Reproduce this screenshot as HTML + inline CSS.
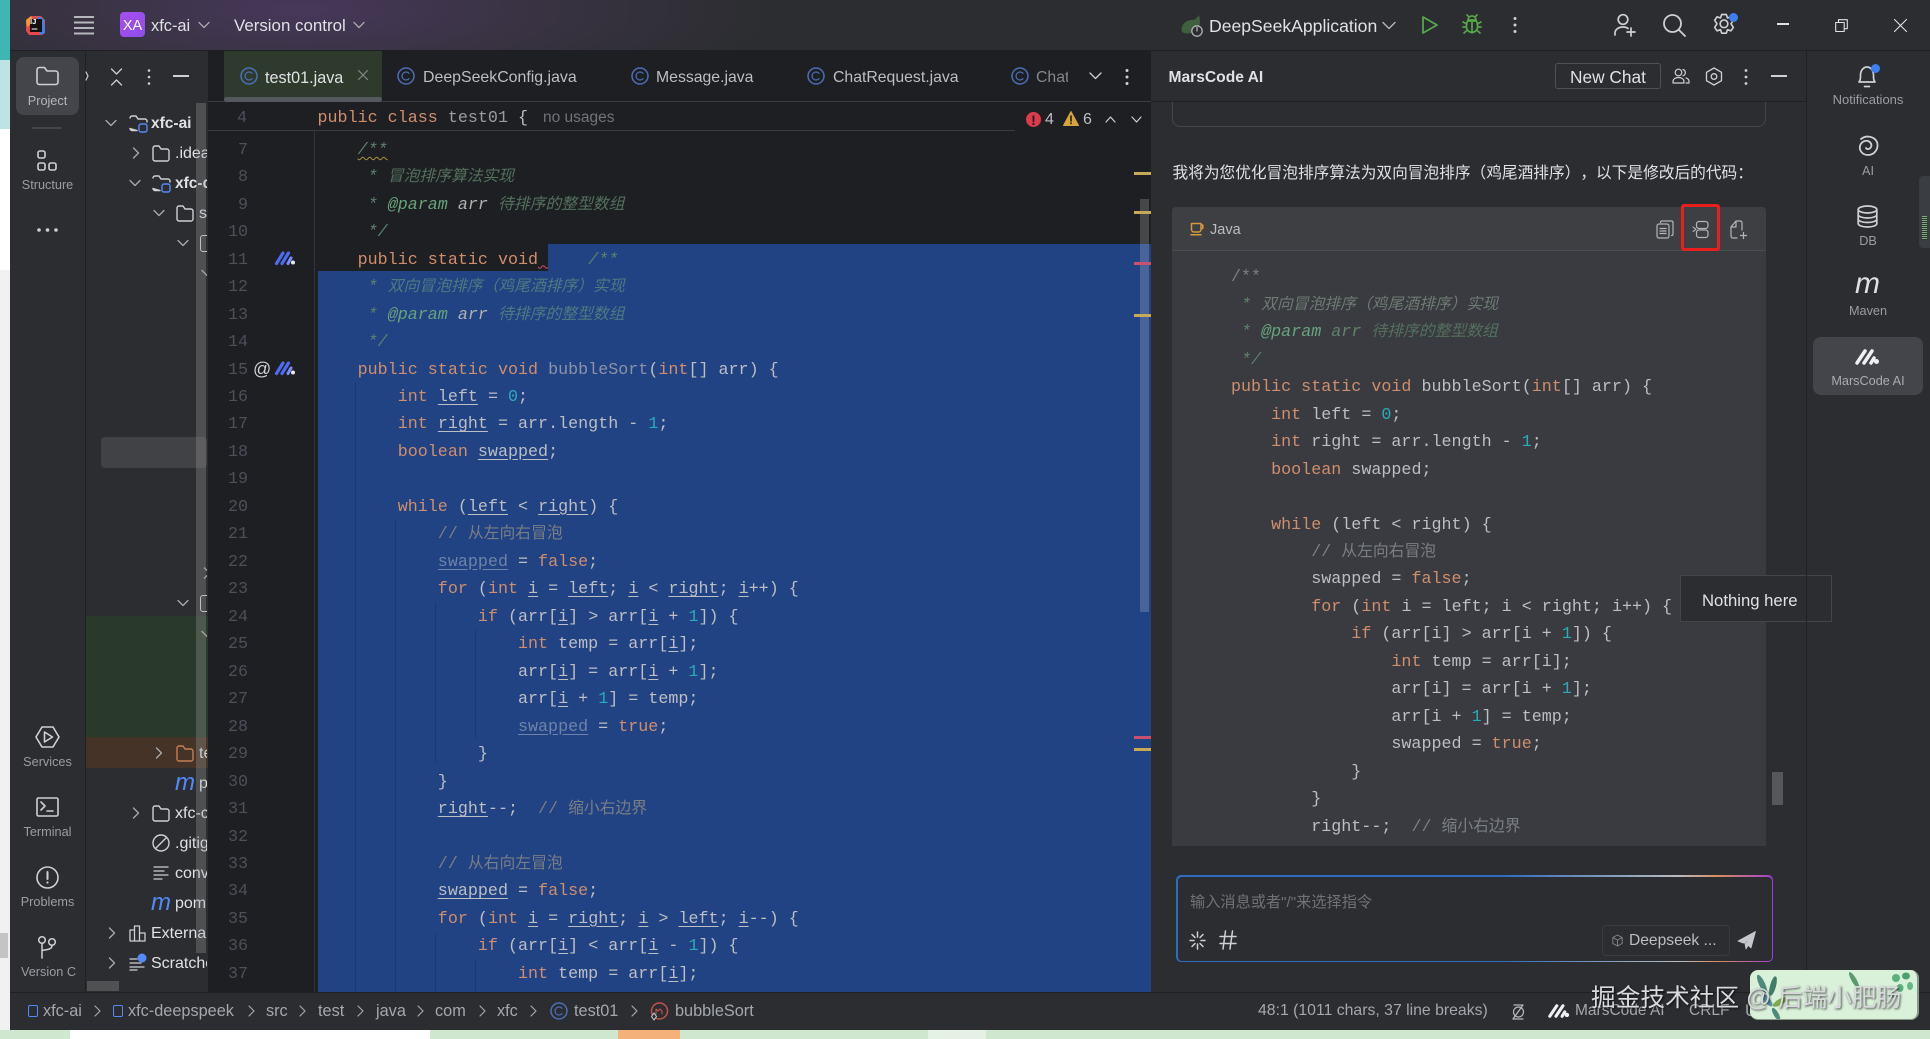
<!DOCTYPE html>
<html><head><meta charset="utf-8"><title>MarsCode AI</title>
<style>
*{box-sizing:border-box}
html,body{margin:0;padding:0;width:1930px;height:1039px;overflow:hidden;background:#cfe6cf}
body{position:relative;font-family:"Liberation Sans","Noto Sans CJK SC",sans-serif;color:#bcbec4}
.a{position:absolute}
.t{position:absolute;white-space:nowrap;line-height:20px;font-size:15.5px;margin-top:1px}
svg{position:absolute;overflow:visible;fill:none;stroke:#ced0d6;stroke-width:1.5;stroke-linecap:round;stroke-linejoin:round}
.lb{position:absolute;font-size:12.7px;line-height:16px;color:#9a9da3;text-align:center;white-space:nowrap}
pre{position:absolute;margin:0;font-family:"Liberation Mono","Noto Sans CJK SC",monospace;font-size:16.72px;line-height:27.47px;color:#bcbec4;white-space:pre}
pre i{font-style:italic}
.k{color:#cf8e6d}.n{color:#2aacb8}.c{color:#7a7e85}.d{color:#5f826b;font-style:italic}.p{color:#67a37c;font-style:italic}.ar{color:#aeb3b0;font-style:italic}
.u{text-decoration:underline;text-underline-offset:3px}.f{color:#6f83a8}.g{color:#8b93a6}
.z{font-family:"Liberation Sans","Noto Sans CJK SC",sans-serif;font-size:15.8px;line-height:0}
.d .z{color:#53705d}
.sel .z{color:#4f7a80}
.st{position:absolute;top:1001px;font-size:16.3px;line-height:20px;color:#a4a7ad;white-space:nowrap}
</style></head>
<body>
<!-- backdrop left strip -->
<div class="a" style="left:0;top:0;width:10px;height:60px;background:#3fb6b4"></div>
<div class="a" style="left:0;top:60px;width:10px;height:69px;background:#bde4e2"></div>
<div class="a" style="left:0;top:129px;width:10px;height:141px;background:#fff"></div>
<div class="a" style="left:0;top:270px;width:10px;height:760px;background:#f1f1f1"></div>
<div class="a" style="left:0;top:933px;width:8px;height:25px;background:#c4c4c4"></div>
<div class="a" style="left:0;top:1030px;width:1930px;height:9px;background:#cfe6cf"></div>
<div class="a" style="left:70px;top:1030px;width:360px;height:9px;background:#fff"></div>
<div class="a" style="left:618px;top:1030px;width:62px;height:9px;background:#f4b27a"></div>
<div class="a" style="left:928px;top:1030px;width:58px;height:9px;background:#e4f1e4"></div>

<!-- IDE frame -->
<div class="a" style="left:10px;top:0;width:1920px;height:1030px;background:#2b2d30"></div>
<div class="a" style="left:10px;top:0;width:1100px;height:50px;background:radial-gradient(ellipse 480px 110px at 290px 10px,#46385a 0%,#3a3344 45%,#2b2d30 100%)"></div>
<div class="a" style="left:10px;top:50px;width:1920px;height:1px;background:#1f2022"></div>

<!-- title bar -->
<svg style="left:25px;top:15px" width="21" height="21" viewBox="0 0 21 21"><path d="M1 5L6 1h10l4 4v13l-3 2H4L1 16z" fill="#e8474c" stroke="none"/><path d="M12 1l7 3 1 14-5 2z" fill="#3b82e6" stroke="none"/><path d="M1 5l5-4 3 6-7 5z" fill="#f39a32" stroke="none"/><rect x="5" y="4" width="12" height="13" fill="#111" stroke="none"/><path d="M7 14h5" stroke="#fff" stroke-width="1"/></svg>
<div class="t" style="left:30px;top:15px;font-size:7.5px;font-weight:bold;color:#fff;line-height:12px">IJ</div>
<svg style="left:73px;top:15px" width="22" height="20" viewBox="0 0 22 20"><path d="M1 2h20M1 7.500h20M1 13h20M1 18.500h20" stroke="#b5b7bc" stroke-width="2" stroke-linecap="butt"/></svg>
<div class="a" style="left:120px;top:12px;width:25px;height:25px;border-radius:4px;background:linear-gradient(135deg,#a84ff0,#8d4ee8)"></div>
<div class="t" style="left:120px;top:15px;width:25px;text-align:center;font-size:14.500px;color:#fff">XA</div>
<div class="t" style="left:151px;top:15px;color:#dfe1e5;font-size:16.400px">xfc-ai</div>
<svg style="left:198px;top:21px" width="12" height="8" viewBox="0 0 12 8"><path d="M1 1.500l5 5 5-5" stroke="#a9abb1" stroke-width="1.300"/></svg>
<div class="t" style="left:234px;top:15px;color:#dfe1e5;font-size:16.900px">Version control</div>
<svg style="left:353px;top:21px" width="12" height="8" viewBox="0 0 12 8"><path d="M1 1.500l5 5 5-5" stroke="#a9abb1" stroke-width="1.300"/></svg>

<svg style="left:1180px;top:14px" width="26" height="24" viewBox="0 0 26 24"><path d="M2 18C0 11 6 6 12 6c3 0 5-2 7-5 2 7 1 14-5 17-4 2-9 2-12 0z" fill="#3f5f3f" stroke="none"/><circle cx="17" cy="17" r="5.200" fill="#2b2d30" stroke="#aeb1b6" stroke-width="1.300"/><path d="M17 13.500V17" stroke="#aeb1b6" stroke-width="1.300"/></svg>
<div class="t" style="left:1209px;top:15px;font-size:17.600px;color:#dfe1e5">DeepSeekApplication</div>
<svg style="left:1382px;top:21px" width="14" height="9" viewBox="0 0 14 9"><path d="M1 1.500l6 6 6-6" stroke="#b5b7bc" stroke-width="1.400"/></svg>
<svg style="left:1421px;top:15px" width="18" height="20" viewBox="0 0 18 20"><path d="M2 2l14 8-14 8z" stroke="#57a64a" stroke-width="1.800"/></svg>
<svg style="left:1462px;top:14px" width="20" height="22" viewBox="0 0 20 22"><path d="M6 6a4 4 0 0 1 8 0zM5.500 7h9c1.500 3 1.500 7 0 9-2 3-7 3-9 0-1.500-2-1.500-6 0-9zM10 7v12M5 10L1 8M15 10l4-2M4.500 13H1M15.500 13H19M5.500 16L2 19M14.500 16l3.500 3M7 3L5 1M13 3l2-2" stroke="#57a64a" stroke-width="1.700"/></svg>
<svg style="left:1512px;top:16px" width="6" height="18" viewBox="0 0 6 18"><circle cx="3" cy="2.500" r="1.500" fill="#ced0d6" stroke="none"/><circle cx="3" cy="9" r="1.500" fill="#ced0d6" stroke="none"/><circle cx="3" cy="15.500" r="1.500" fill="#ced0d6" stroke="none"/></svg>
<svg style="left:1613px;top:13px" width="24" height="24" viewBox="0 0 24 24"><circle cx="10" cy="6.500" r="4.800" stroke-width="1.700"/><path d="M2 22v-2c0-3 3-6 8-6 2 0 4 .5 5 1.500M18 15v8M14 19h8" stroke-width="1.700"/></svg>
<svg style="left:1662px;top:13px" width="24" height="24" viewBox="0 0 24 24"><circle cx="10.500" cy="10.500" r="8.500" stroke-width="1.800"/><path d="M17 17l6 6" stroke-width="1.800"/></svg>
<svg style="left:1710px;top:11px" width="28" height="28" viewBox="0 0 24 24"><path d="M10 2h4l1 3 3-1 2 3-2 3 2 3-2 3-3-1-1 3h-4l-1-3-3 1-2-3 2-3-2-3 2-3 3 1z" transform="translate(0 1)" stroke-width="1.400"/><circle cx="12" cy="11" r="3.300" stroke-width="1.400"/></svg>
<div class="a" style="left:1729px;top:13px;width:9px;height:9px;border-radius:50%;background:#3d7ef0"></div>
<div class="a" style="left:1777px;top:23px;width:12px;height:1.500px;background:#dfe1e5"></div>
<svg style="left:1835px;top:19px" width="13" height="13" viewBox="0 0 13 13"><path d="M.700 3.500h8.500v9H.700zM3.500 3.500V.700h8.800v9H9.200" stroke="#dfe1e5" stroke-width="1.100" stroke-linecap="butt"/></svg>
<svg style="left:1894px;top:19px" width="13" height="13" viewBox="0 0 13 13"><path d="M.500.500l12 12M12.500.500l-12 12" stroke="#dfe1e5" stroke-width="1.100"/></svg>

<!-- left tool strip -->
<div class="a" style="left:85px;top:50px;width:1px;height:942px;background:#1f2022"></div>
<div class="a" style="left:16px;top:57px;width:63px;height:58px;border-radius:8px;background:#43454a"></div>
<svg style="left:36px;top:66px" width="23" height="20" viewBox="0 0 23 20"><path d="M1 4a2.500 2.500 0 0 1 2.500-2.500h5L11 5h8.500A2.500 2.500 0 0 1 22 7.500V16a2.500 2.500 0 0 1-2.500 2.500h-16A2.500 2.500 0 0 1 1 16z" stroke-width="1.600"/></svg>
<div class="lb" style="left:16px;top:93px;width:63px;color:#b4b6bb">Project</div>
<div class="a" style="left:32px;top:127px;width:30px;height:2px;background:#43454a"></div>
<svg style="left:36px;top:150px" width="22" height="22" viewBox="0 0 22 22"><rect x="2" y="1" width="7" height="7" rx="1.800" stroke-width="1.600"/><rect x="2" y="13" width="7" height="7" rx="1.800" stroke-width="1.600"/><rect x="13" y="13" width="7" height="7" rx="1.800" stroke-width="1.600"/></svg>
<div class="lb" style="left:10px;top:177px;width:75px">Structure</div>
<svg style="left:36px;top:227px" width="24" height="6" viewBox="0 0 24 6"><circle cx="3" cy="3" r="1.800" fill="#ced0d6" stroke="none"/><circle cx="11.500" cy="3" r="1.800" fill="#ced0d6" stroke="none"/><circle cx="20" cy="3" r="1.800" fill="#ced0d6" stroke="none"/></svg>

<svg style="left:35px;top:725px" width="25" height="24" viewBox="0 0 25 24"><path d="M7 2h11l6 10-6 10H7L1 12z" stroke-width="1.600"/><path d="M9.500 7l8 5-8 5z" stroke-width="1.600"/></svg>
<div class="lb" style="left:10px;top:754px;width:75px">Services</div>
<svg style="left:36px;top:797px" width="23" height="20" viewBox="0 0 23 20"><rect x="1" y="1" width="21" height="18" rx="1.500" stroke-width="1.600"/><path d="M5 5l4 4-4 4M11 14h6" stroke-width="1.600"/></svg>
<div class="lb" style="left:10px;top:824px;width:75px">Terminal</div>
<svg style="left:36px;top:866px" width="23" height="23" viewBox="0 0 23 23"><circle cx="11.500" cy="11.500" r="10.500" stroke-width="1.600"/><path d="M11.500 6v7" stroke-width="2"/><circle cx="11.500" cy="16.500" r="1.100" fill="#ced0d6" stroke="none"/></svg>
<div class="lb" style="left:10px;top:894px;width:75px">Problems</div>
<svg style="left:37px;top:936px" width="21" height="23" viewBox="0 0 21 23"><circle cx="5" cy="4" r="3.300" stroke-width="1.500"/><circle cx="15" cy="6" r="3.300" stroke-width="1.500"/><path d="M5 7.500V22M15 9.500c0 4-5 4-10 5" stroke-width="1.500"/></svg>
<div class="lb" style="left:10px;top:964px;width:66px;overflow:hidden;text-align:right">Version C</div>

<!-- project panel -->
<div class="a" style="left:86px;top:616px;width:122px;height:121px;background:#2a3a2a"></div>
<div class="a" style="left:86px;top:737px;width:122px;height:31px;background:#443326"></div>
<div class="a" style="left:101px;top:437px;width:106px;height:31px;border-radius:4px;background:#414246"></div>
<svg style="left:85px;top:70px" width="4" height="12" viewBox="0 0 4 12"><path d="M1 2l2 4-2 4" stroke-width="1.200"/></svg>
<svg style="left:110px;top:68px" width="13" height="18" viewBox="0 0 13 18"><path d="M1.500 1l5 5 5-5M1.500 17l5-5 5 5" stroke-width="1.300"/></svg>
<svg style="left:146px;top:68px" width="6" height="18" viewBox="0 0 6 18"><circle cx="3" cy="2.500" r="1.300" fill="#ced0d6" stroke="none"/><circle cx="3" cy="9" r="1.300" fill="#ced0d6" stroke="none"/><circle cx="3" cy="15.500" r="1.300" fill="#ced0d6" stroke="none"/></svg>
<div class="a" style="left:173px;top:75px;width:16px;height:2px;background:#ced0d6"></div>

<!-- tree: clipped at x=207 -->
<div class="a" style="left:0;top:0;width:207px;height:990px;overflow:hidden">
<svg style="left:105px;top:119px" width="12" height="8" viewBox="0 0 12 8"><path d="M1 1.500l5 5 5-5" stroke="#a9abb1" stroke-width="1.300"/></svg>
<svg style="left:129px;top:115px" width="20" height="18" viewBox="0 0 20 18"><path d="M1 3a2 2 0 0 1 2-2h4l2 3h7a2 2 0 0 1 2 2v1M8 15.500H3a2 2 0 0 1-2-2z" stroke-width="1.400"/><rect x="10" y="9" width="8" height="8" rx="2" stroke="#548af7" stroke-width="1.400"/></svg>
<div class="t" style="left:151px;top:113px;font-weight:bold;color:#dfe1e5">xfc-ai</div>
<svg style="left:132px;top:147px" width="8" height="12" viewBox="0 0 8 12"><path d="M1.500 1l5 5-5 5" stroke="#a9abb1" stroke-width="1.300"/></svg>
<svg style="left:152px;top:145px" width="18" height="17" viewBox="0 0 18 17"><path d="M1 3a2 2 0 0 1 2-2h4l2 3h6a2 2 0 0 1 2 2v8a2 2 0 0 1-2 2H3a2 2 0 0 1-2-2z" stroke-width="1.400"/></svg>
<div class="t" style="left:175px;top:143px;color:#dfe1e5;font-size:16px">.idea</div>
<svg style="left:129px;top:179px" width="12" height="8" viewBox="0 0 12 8"><path d="M1 1.500l5 5 5-5" stroke="#a9abb1" stroke-width="1.300"/></svg>
<svg style="left:152px;top:175px" width="20" height="18" viewBox="0 0 20 18"><path d="M1 3a2 2 0 0 1 2-2h4l2 3h7a2 2 0 0 1 2 2v1M8 15.500H3a2 2 0 0 1-2-2z" stroke-width="1.400"/><rect x="10" y="9" width="8" height="8" rx="2" stroke="#548af7" stroke-width="1.400"/></svg>
<div class="t" style="left:175px;top:173px;font-weight:bold;color:#dfe1e5">xfc-deepspeek</div>
<svg style="left:153px;top:209px" width="12" height="8" viewBox="0 0 12 8"><path d="M1 1.500l5 5 5-5" stroke="#a9abb1" stroke-width="1.300"/></svg>
<svg style="left:176px;top:205px" width="18" height="17" viewBox="0 0 18 17"><path d="M1 3a2 2 0 0 1 2-2h4l2 3h6a2 2 0 0 1 2 2v8a2 2 0 0 1-2 2H3a2 2 0 0 1-2-2z" stroke-width="1.400"/></svg>
<div class="t" style="left:199px;top:203px;color:#dfe1e5;font-size:16px">src</div>
<svg style="left:177px;top:239px" width="12" height="8" viewBox="0 0 12 8"><path d="M1 1.500l5 5 5-5" stroke="#a9abb1" stroke-width="1.300"/></svg>
<div class="a" style="left:200px;top:235px;width:18px;height:17px;border:1.400px solid #ced0d6;border-radius:3px"></div>
<svg style="left:201px;top:269px" width="12" height="8" viewBox="0 0 12 8"><path d="M1 1.500l5 5 5-5" stroke="#a9abb1" stroke-width="1.300"/></svg>
<svg style="left:203px;top:567px" width="8" height="12" viewBox="0 0 8 12"><path d="M1.500 1l5 5-5 5" stroke="#a9abb1" stroke-width="1.300"/></svg>
<svg style="left:177px;top:599px" width="12" height="8" viewBox="0 0 12 8"><path d="M1 1.500l5 5 5-5" stroke="#a9abb1" stroke-width="1.300"/></svg>
<div class="a" style="left:200px;top:595px;width:18px;height:17px;border:1.400px solid #ced0d6;border-radius:3px"></div>
<svg style="left:201px;top:630px" width="12" height="8" viewBox="0 0 12 8"><path d="M1 1.500l5 5 5-5" stroke="#a9abb1" stroke-width="1.300"/></svg>
<svg style="left:155px;top:747px" width="8" height="12" viewBox="0 0 8 12"><path d="M1.500 1l5 5-5 5" stroke="#a9abb1" stroke-width="1.300"/></svg>
<svg style="left:176px;top:745px" width="18" height="17" viewBox="0 0 18 17"><path d="M1 3a2 2 0 0 1 2-2h4l2 3h6a2 2 0 0 1 2 2v8a2 2 0 0 1-2 2H3a2 2 0 0 1-2-2z" stroke="#c77d55" stroke-width="1.400"/></svg>
<div class="t" style="left:199px;top:743px;color:#dfe1e5;font-size:16px">test</div>
<div class="t" style="left:175px;top:770px;font:italic 24px/24px 'Liberation Sans',sans-serif;color:#548af7">m</div>
<div class="t" style="left:199px;top:773px;color:#dfe1e5;font-size:16px">pom.xml</div>
<svg style="left:132px;top:807px" width="8" height="12" viewBox="0 0 8 12"><path d="M1.500 1l5 5-5 5" stroke="#a9abb1" stroke-width="1.300"/></svg>
<svg style="left:152px;top:805px" width="18" height="17" viewBox="0 0 18 17"><path d="M1 3a2 2 0 0 1 2-2h4l2 3h6a2 2 0 0 1 2 2v8a2 2 0 0 1-2 2H3a2 2 0 0 1-2-2z" stroke-width="1.400"/></svg>
<div class="t" style="left:175px;top:803px;color:#dfe1e5;font-size:16px">xfc-common</div>
<svg style="left:152px;top:834px" width="18" height="18" viewBox="0 0 18 18"><circle cx="9" cy="9" r="8" stroke-width="1.400"/><path d="M3.500 14.500l11-11" stroke-width="1.400"/></svg>
<div class="t" style="left:175px;top:833px;color:#dfe1e5;font-size:16px">.gitignore</div>
<svg style="left:153px;top:865px" width="16" height="16" viewBox="0 0 16 16"><path d="M1 2h14M1 6h10M1 10h14M1 14h8" stroke-width="1.300"/></svg>
<div class="t" style="left:175px;top:863px;color:#dfe1e5;font-size:16px">conversations</div>
<div class="t" style="left:151px;top:890px;font:italic 24px/24px 'Liberation Sans',sans-serif;color:#548af7">m</div>
<div class="t" style="left:175px;top:893px;color:#dfe1e5;font-size:16px">pom.xml</div>
<svg style="left:108px;top:927px" width="8" height="12" viewBox="0 0 8 12"><path d="M1.500 1l5 5-5 5" stroke="#a9abb1" stroke-width="1.300"/></svg>
<svg style="left:129px;top:925px" width="18" height="17" viewBox="0 0 18 17"><path d="M1 5h4.500v11H1zM5.500 1h5v15h-5zM10.500 8H16v8h-5.500z" stroke-width="1.300"/></svg>
<div class="t" style="left:151px;top:923px;color:#dfe1e5;font-size:16px">External Libraries</div>
<svg style="left:108px;top:957px" width="8" height="12" viewBox="0 0 8 12"><path d="M1.500 1l5 5-5 5" stroke="#a9abb1" stroke-width="1.300"/></svg>
<svg style="left:129px;top:953px" width="18" height="17" viewBox="0 0 18 17"><path d="M1 6h7M1 10h11M1 14h14M1 17h7" stroke-width="1.300"/><circle cx="13" cy="5" r="4.500" fill="#548af7" stroke="none"/></svg>
<div class="t" style="left:151px;top:953px;color:#dfe1e5;font-size:16px">Scratches</div>
</div>
<div class="a" style="left:196px;top:103px;width:10px;height:850px;background:rgba(155,155,155,.32)"></div>
<div class="a" style="left:87px;top:981px;width:32px;height:10px;background:#505153"></div>

<!-- tabs & editor -->
<div class="a" style="left:208px;top:50px;width:943px;height:52px;background:#1e1f22"></div>
<div class="a" style="left:208px;top:101px;width:943px;height:1px;background:#393b40"></div>
<div class="a" style="left:224px;top:51px;width:158px;height:51px;background:#2e3b2c"></div>
<div class="a" style="left:224px;top:97px;width:158px;height:5px;border-radius:3px;background:#55585c"></div>

<svg style="left:240px;top:67px" width="18" height="18" viewBox="0 0 18 18"><circle cx="9" cy="9" r="8" stroke="#4b6eb8" stroke-width="1.500"/><path d="M12 6.300a4 4 0 1 0 0 5.400" stroke="#4b6eb8" stroke-width="1.200"/></svg>
<div class="t" style="left:265px;top:67px;color:#dfe1e5;font-size:16.200px">test01.java</div>
<svg style="left:358px;top:70px" width="10" height="10" viewBox="0 0 10 10"><path d="M.500.500l9 9M9.500.500l-9 9" stroke="#85878c" stroke-width="1.200"/></svg>
<svg style="left:397px;top:67px" width="18" height="18" viewBox="0 0 18 18"><circle cx="9" cy="9" r="8" stroke="#4b6eb8" stroke-width="1.500"/><path d="M12 6.300a4 4 0 1 0 0 5.400" stroke="#4b6eb8" stroke-width="1.200"/></svg>
<div class="t" style="left:423px;top:67px;color:#bcbec4;font-size:15.900px">DeepSeekConfig.java</div>
<svg style="left:631px;top:67px" width="18" height="18" viewBox="0 0 18 18"><circle cx="9" cy="9" r="8" stroke="#4b6eb8" stroke-width="1.500"/><path d="M12 6.300a4 4 0 1 0 0 5.400" stroke="#4b6eb8" stroke-width="1.200"/></svg>
<div class="t" style="left:656px;top:67px;color:#bcbec4;font-size:15.800px">Message.java</div>
<svg style="left:807px;top:67px" width="18" height="18" viewBox="0 0 18 18"><circle cx="9" cy="9" r="8" stroke="#4b6eb8" stroke-width="1.500"/><path d="M12 6.300a4 4 0 1 0 0 5.400" stroke="#4b6eb8" stroke-width="1.200"/></svg>
<div class="t" style="left:833px;top:67px;color:#bcbec4;font-size:15.800px">ChatRequest.java</div>
<svg style="left:1011px;top:67px" width="18" height="18" viewBox="0 0 18 18"><circle cx="9" cy="9" r="8" stroke="#4b6eb8" stroke-width="1.500"/><path d="M12 6.300a4 4 0 1 0 0 5.400" stroke="#4b6eb8" stroke-width="1.200"/></svg>
<div class="t" style="left:1036px;top:67px;color:#85878c;font-size:15.800px;width:32px;overflow:hidden">Chat</div>
<svg style="left:1089px;top:72px" width="13" height="8" viewBox="0 0 13 8"><path d="M1 1l5.500 5.500L12 1" stroke="#ced0d6" stroke-width="1.300"/></svg>
<svg style="left:1124px;top:68px" width="6" height="18" viewBox="0 0 6 18"><circle cx="3" cy="2.500" r="1.500" fill="#ced0d6" stroke="none"/><circle cx="3" cy="9" r="1.500" fill="#ced0d6" stroke="none"/><circle cx="3" cy="15.500" r="1.500" fill="#ced0d6" stroke="none"/></svg>

<div class="a" style="left:208px;top:102px;width:943px;height:890px;background:#1e1f22"></div>
<div class="a" style="left:314px;top:131px;width:1px;height:861px;background:#313438"></div>
<!-- selection -->
<div class="a" style="left:548px;top:244px;width:603px;height:27px;background:#214283"></div>
<div class="a" style="left:317.500px;top:271px;width:833.500px;height:721px;background:#214283"></div>
<!-- indent guides -->
<div class="a" style="left:355px;top:383px;width:1px;height:609px;background:#1b3870"></div>
<div class="a" style="left:395px;top:520px;width:1px;height:472px;background:#1b3870"></div>
<div class="a" style="left:435px;top:602px;width:1px;height:162px;background:#1b3870"></div>
<div class="a" style="left:435px;top:933px;width:1px;height:59px;background:#1b3870"></div>
<div class="a" style="left:475px;top:630px;width:1px;height:108px;background:#1b3870"></div>
<div class="a" style="left:475px;top:960px;width:1px;height:32px;background:#1b3870"></div>

<!-- sticky line -->
<pre style="left:237px;top:105px;color:#4b5059">4</pre>
<pre style="left:317.500px;top:105px;color:#9a9ca1"><span class="k">public class</span> test01 <span style="color:#bcbec4">{</span></pre>
<div class="t" style="left:543px;top:107px;color:#6f737a;font-size:15.500px">no usages</div>
<div class="a" style="left:208px;top:130px;width:807px;height:1px;background:#393b40"></div>
<div class="a" style="left:1026px;top:112px;width:15px;height:15px;border-radius:50%;background:#db3b4b"></div>
<div class="t" style="left:1026px;top:109px;width:15px;text-align:center;color:#1e1f22;font-weight:bold;font-size:14px">!</div>
<div class="t" style="left:1045px;top:109px;color:#bcbec4;font-size:16px">4</div>
<svg style="left:1063px;top:111px" width="16" height="15" viewBox="0 0 16 15"><path d="M8 .500L15.500 14.500H.500z" fill="#d6a43a" stroke="#d6a43a" stroke-width="1"/><path d="M8 5v5M8 12v.500" stroke="#1e1f22" stroke-width="1.600"/></svg>
<div class="t" style="left:1083px;top:109px;color:#bcbec4;font-size:16px">6</div>
<svg style="left:1105px;top:116px" width="11" height="7" viewBox="0 0 11 7"><path d="M1 6l4.500-5L10 6" stroke-width="1.200"/></svg>
<svg style="left:1131px;top:116px" width="11" height="7" viewBox="0 0 11 7"><path d="M1 1l4.500 5L10 1" stroke-width="1.200"/></svg>

<!-- scroll markers -->
<div class="a" style="left:1140px;top:199px;width:9px;height:413px;background:rgba(255,255,255,.18)"></div>
<div class="a" style="left:1134px;top:172px;width:17px;height:3px;background:#c9a858"></div>
<div class="a" style="left:1134px;top:211px;width:17px;height:3px;background:#c9a858"></div>
<div class="a" style="left:1134px;top:262px;width:17px;height:3px;background:#c8516f"></div>
<div class="a" style="left:1134px;top:314px;width:17px;height:3px;background:#c9a858"></div>
<div class="a" style="left:1134px;top:736px;width:17px;height:3px;background:#c8516f"></div>
<div class="a" style="left:1134px;top:748px;width:17px;height:3px;background:#c9a858"></div>

<!-- gutter icons -->
<svg style="left:275px;top:251px" width="21" height="14" viewBox="0 0 21 14"><path d="M1.500 12.500L8 2M7 12.500L13.500 2" stroke="#4f6bf0" stroke-width="3.200"/><path d="M13 12.500L16 7" stroke="#7a8cf5" stroke-width="3"/><circle cx="18" cy="11.500" r="2" fill="#e7e9ee" stroke="none"/></svg>
<svg style="left:275px;top:361px" width="21" height="14" viewBox="0 0 21 14"><path d="M1.500 12.500L8 2M7 12.500L13.500 2" stroke="#4f6bf0" stroke-width="3.200"/><path d="M13 12.500L16 7" stroke="#7a8cf5" stroke-width="3"/><circle cx="18" cy="11.500" r="2" fill="#e7e9ee" stroke="none"/></svg>
<div class="t" style="left:253px;top:358px;color:#ced0d6;font-size:18px">@</div>

<!-- line numbers -->
<pre style="left:207px;top:136.800px;width:41px;text-align:right;color:#4b5059;height:855px;overflow:hidden">7
8
9
10
11
12
13
14
15
16
17
18
19
20
21
22
23
24
25
26
27
28
29
30
31
32
33
34
35
36
37</pre>

<!-- code -->
<div class="a" style="left:317.500px;top:131px;width:820px;height:861px;overflow:hidden">
<pre style="left:0;top:5.800px">    <span class="d" style="text-decoration:underline wavy #a9923f 1px;text-underline-offset:2px">/**</span>
     <span class="d">* <span class="z">冒泡排序算法实现</span></span>
     <span class="d">* </span><span class="p">@param</span> <span class="ar">arr</span> <span class="d"><span class="z">待排序的整型数组</span></span>
     <span class="d">*/</span>
    <span class="k">public static void</span><span style="text-decoration:underline wavy #c8516f 1px"> </span>    <span class="d">/**</span>
     <span class="d sel">* <span class="z">双向冒泡排序（鸡尾酒排序）实现</span></span>
     <span class="d">* </span><span class="p">@param</span> <span class="ar">arr</span> <span class="d sel"><span class="z">待排序的整型数组</span></span>
     <span class="d">*/</span>
    <span class="k">public static void</span> <span class="g">bubbleSort</span>(<span class="k">int</span>[] arr) {
        <span class="k">int</span> <span class="u">left</span> = <span class="n">0</span>;
        <span class="k">int</span> <span class="u">right</span> = arr.length - <span class="n">1</span>;
        <span class="k">boolean</span> <span class="u">swapped</span>;

        <span class="k">while</span> (<span class="u">left</span> &lt; <span class="u">right</span>) {
            <span class="c">// <span class="z">从左向右冒泡</span></span>
            <span class="u f">swapped</span> = <span class="k">false</span>;
            <span class="k">for</span> (<span class="k">int</span> <span class="u">i</span> = <span class="u">left</span>; <span class="u">i</span> &lt; <span class="u">right</span>; <span class="u">i</span>++) {
                <span class="k">if</span> (arr[<span class="u">i</span>] &gt; arr[<span class="u">i</span> + <span class="n">1</span>]) {
                    <span class="k">int</span> temp = arr[<span class="u">i</span>];
                    arr[<span class="u">i</span>] = arr[<span class="u">i</span> + <span class="n">1</span>];
                    arr[<span class="u">i</span> + <span class="n">1</span>] = temp;
                    <span class="u f">swapped</span> = <span class="k">true</span>;
                }
            }
            <span class="u">right</span>--;  <span class="c">// <span class="z">缩小右边界</span></span>

            <span class="c">// <span class="z">从右向左冒泡</span></span>
            <span class="u">swapped</span> = <span class="k">false</span>;
            <span class="k">for</span> (<span class="k">int</span> <span class="u">i</span> = <span class="u">right</span>; <span class="u">i</span> &gt; <span class="u">left</span>; <span class="u">i</span>--) {
                <span class="k">if</span> (arr[<span class="u">i</span>] &lt; arr[<span class="u">i</span> - <span class="n">1</span>]) {
                    <span class="k">int</span> temp = arr[<span class="u">i</span>];</pre>
</div>

<!-- chat panel -->
<div class="a" style="left:1151px;top:51px;width:655px;height:941px;background:#2b2d30"></div>
<div class="a" style="left:1151px;top:101px;width:655px;height:1px;background:#1f2022"></div>
<div class="t" style="left:1168.500px;top:67px;font-weight:bold;color:#dfe1e5;font-size:15.600px">MarsCode AI</div>
<div class="a" style="left:1555px;top:63px;width:106px;height:26px;border:1px solid #4e5157;border-radius:3px"></div>
<div class="t" style="left:1555px;top:66px;width:106px;text-align:center;font-size:17.300px;color:#dfe1e5">New Chat</div>
<svg style="left:1672px;top:68px" width="18" height="16" viewBox="0 0 18 16"><circle cx="6.500" cy="4.500" r="3.300" stroke-width="1.200"/><path d="M1 15v-1.500C1 11 3.500 9.500 6.500 9.500S12 11 12 13.500V15zM11 1.500a3.300 3.300 0 0 1 0 6.300M14 10c2 .5 3 2 3 3.500V15h-3" stroke-width="1.200"/></svg>
<svg style="left:1705px;top:67px" width="18" height="19" viewBox="0 0 18 19"><path d="M9 1l7.500 4.300v8.400L9 18l-7.500-4.300V5.300z" stroke-width="1.300"/><circle cx="9" cy="9.500" r="2.800" stroke-width="1.300"/></svg>
<svg style="left:1743px;top:68px" width="6" height="18" viewBox="0 0 6 18"><circle cx="3" cy="2.500" r="1.400" fill="#ced0d6" stroke="none"/><circle cx="3" cy="9" r="1.400" fill="#ced0d6" stroke="none"/><circle cx="3" cy="15.500" r="1.400" fill="#ced0d6" stroke="none"/></svg>
<div class="a" style="left:1771px;top:75px;width:16px;height:2px;background:#ced0d6"></div>

<div class="a" style="left:1172px;top:102px;width:594px;height:25px;border:1px solid #44464b;border-top:0;border-radius:0 0 8px 8px"></div>
<div class="a" style="left:1172.500px;top:161px;white-space:nowrap;font-size:15.700px;line-height:22px;color:#dfe1e5;font-family:'Noto Sans CJK SC','Liberation Sans',sans-serif;text-spacing-trim:space-all;font-feature-settings:'palt' 0,'halt' 0,'chws' 0">我将为您优化冒泡排序算法为双向冒泡排序（鸡尾酒排序），以下是修改后的代码：</div>

<div class="a" style="left:1172px;top:207px;width:594px;height:639px;background:#393b40;border-radius:4px 4px 0 0"></div>
<div class="a" style="left:1172px;top:207px;width:594px;height:44px;background:#3d3f43;border-bottom:1px solid #4a4c50;border-radius:4px 4px 0 0"></div>
<svg style="left:1190px;top:222px" width="14" height="14" viewBox="0 0 14 14"><path d="M1.500 1.500h9.500v6a2.500 2.500 0 0 1-2.500 2.500H4A2.500 2.500 0 0 1 1.500 7.500zM11 3h1.800v3.500H11M1 12.800h10" stroke="#d69a3a" stroke-width="1.500"/></svg>
<div class="t" style="left:1210px;top:219px;font-size:14.500px;color:#bcbec4">Java</div>
<svg style="left:1656px;top:220px" width="18" height="19" viewBox="0 0 18 19"><rect x="1" y="4" width="12" height="14" rx="2" stroke-width="1.200" stroke="#b3b5ba"/><path d="M4.500 2.500c0-1 .7-1.500 1.500-1.500h9.500c1 0 1.500.7 1.500 1.500V14c0 1-.5 1.500-1.500 1.500M4 8.500h6M4 11h6M4 13.500h6" stroke-width="1.200" stroke="#b3b5ba"/></svg>
<svg style="left:1693px;top:220px" width="16" height="19" viewBox="0 0 16 19"><rect x="3.500" y="1.500" width="11.500" height="7" rx="2.500" stroke-width="1.200" stroke="#b3b5ba"/><rect x="3.500" y="10" width="11.500" height="7.500" rx="2.500" stroke-width="1.200" stroke="#b3b5ba"/><path d="M0 7l3 2.300L0 11.600" stroke-width="1.100" stroke="#b3b5ba"/></svg>
<svg style="left:1730px;top:220px" width="17" height="19" viewBox="0 0 17 19"><path d="M7 18H3a2 2 0 0 1-2-2V7l5-6h4c1.500 0 2 1 2 2v7M6 1.500V7H1.500M10.500 15.500h6M13.500 12.500v6" stroke-width="1.200" stroke="#b3b5ba"/></svg>
<div class="a" style="left:1681px;top:204px;width:38.500px;height:47px;border:3px solid #e8201d;border-radius:3px"></div>

<div class="a" style="left:1232px;top:252px;width:534px;height:594px;overflow:hidden">
<pre style="left:-1px;top:12.300px"><span class="c">/**</span>
 <span class="d">* <span class="z" style="color:#6e7a72">双向冒泡排序（鸡尾酒排序）实现</span></span>
 <span class="d">* </span><span class="p">@param</span> <span class="d">arr</span> <span class="d"><span class="z">待排序的整型数组</span></span>
 <span class="d">*/</span>
<span class="k">public static void</span> bubbleSort(<span class="k">int</span>[] arr) {
    <span class="k">int</span> left = <span class="n">0</span>;
    <span class="k">int</span> right = arr.length - <span class="n">1</span>;
    <span class="k">boolean</span> swapped;

    <span class="k">while</span> (left &lt; right) {
        <span class="c">// <span class="z">从左向右冒泡</span></span>
        swapped = <span class="k">false</span>;
        <span class="k">for</span> (<span class="k">int</span> i = left; i &lt; right; i++) {
            <span class="k">if</span> (arr[i] &gt; arr[i + <span class="n">1</span>]) {
                <span class="k">int</span> temp = arr[i];
                arr[i] = arr[i + <span class="n">1</span>];
                arr[i + <span class="n">1</span>] = temp;
                swapped = <span class="k">true</span>;
            }
        }
        right--;  <span class="c">// <span class="z">缩小右边界</span></span></pre>
</div>
<div class="a" style="left:1772px;top:772px;width:11px;height:33px;background:#55575a"></div>

<!-- tooltip -->
<div class="a" style="left:1679.500px;top:575px;width:152.500px;height:47px;background:#2b2d30;border:1px solid #43454a"></div>
<div class="t" style="left:1702px;top:590px;font-size:16.700px;color:#dfe1e5">Nothing here</div>

<!-- input -->
<div class="a" style="left:1176px;top:875px;width:597px;height:87px;border-radius:5px;padding:1.500px;background:linear-gradient(90deg,#2f6cc0 0%,#2f6cc0 55%,#b9bcc0 84%,#d98c5a 91%,#a13fd6 100%)"><div style="width:100%;height:100%;background:#2b2d30;border-radius:4px"></div></div>
<div class="t" style="left:1190px;top:892px;font-size:15.200px;color:#6f7276">输入消息或者"/"来选择指令</div>
<svg style="left:1189px;top:931px" width="17" height="19" viewBox="0 0 17 19"><path d="M8.500 1v5M8.500 13v5M1 9.500h4M12 9.500h4M3 3.500l3 3M14 3.500l-3 3M3 15.500l3-3M14 15.500l-3-3" stroke-width="1.500"/></svg>
<svg style="left:1219px;top:930px" width="18" height="20" viewBox="0 0 18 20"><path d="M6.500 1L4 19M13.500 1L11 19M1 6.500h16M1 13.500h16" stroke-width="1.500"/></svg>
<div class="a" style="left:1602px;top:925px;width:128px;height:31px;border:1px solid #393b40;border-radius:4px"></div>
<svg style="left:1612px;top:934px" width="11" height="13" viewBox="0 0 13 15"><path d="M6.500 1l5.500 3v7l-5.500 3L1 11V4zM1 4l5.500 3L12 4M6.500 7v7" stroke="#8a8c91" stroke-width="1"/></svg>
<div class="t" style="left:1629px;top:930px;font-size:15.600px;color:#bcbec4">Deepseek ...</div>
<svg style="left:1737px;top:931px" width="19" height="19" viewBox="0 0 19 19"><path d="M18.500.500L1 10l5 2 2 0zM18.500.500L14 17l-5-4.500zM8 12.500L9 18l2-3.500z" fill="#c5c7cc" stroke="#c5c7cc" stroke-width=".8"/></svg>

<!-- right tool strip -->
<div class="a" style="left:1806px;top:51px;width:1px;height:941px;background:#1f2022"></div>
<svg style="left:1857px;top:63px" width="20" height="26" viewBox="0 0 20 26"><path d="M2 19c1.500-2 1.500-3.500 1.500-7 0-4.500 3-8 6.500-8s6.500 3.500 6.500 8c0 3.500 0 5 1.500 7zM7.500 23.500h5" stroke-width="1.700"/></svg>
<div class="a" style="left:1871px;top:64px;width:9px;height:9px;border-radius:50%;background:#3d7ef0"></div>
<div class="lb" style="left:1813px;top:92px;width:110px;font-size:13px">Notifications</div>
<svg style="left:1857px;top:135px" width="22" height="22" viewBox="0 0 22 22"><path d="M4 4C9 0 17 1 20 7c2 6-2 13-9 13C5 20 2 15 3 11c1-4 5-6 8-5 3 1 4 4 3 6-1 2-4 3-5 1" stroke-width="1.800"/></svg>
<div class="lb" style="left:1813px;top:163px;width:110px">AI</div>
<svg style="left:1857px;top:205px" width="21" height="23" viewBox="0 0 21 23"><ellipse cx="10.500" cy="4.500" rx="9.300" ry="3.500" stroke-width="1.700"/><path d="M1.200 4.500v14c0 2 4 3.500 9.300 3.500s9.300-1.500 9.300-3.500v-14M1.200 9.500c0 2 4 3.500 9.300 3.500s9.300-1.500 9.300-3.500M1.200 14c0 2 4 3.500 9.300 3.500s9.300-1.500 9.300-3.500" stroke-width="1.700"/></svg>
<div class="lb" style="left:1813px;top:233px;width:110px">DB</div>
<div class="t" style="left:1855px;top:268px;font:italic 30px/30px 'Liberation Sans',sans-serif;color:#dfe1e5">m</div>
<div class="lb" style="left:1813px;top:303px;width:110px">Maven</div>
<div class="a" style="left:1813px;top:337px;width:110px;height:58px;border-radius:8px;background:#43454a"></div>
<svg style="left:1855px;top:349px" width="25" height="16" viewBox="0 0 25 16"><path d="M2 14L10 2M9 14L17 2M16 14L19 9" stroke="#eef0f3" stroke-width="3.500"/><circle cx="21.500" cy="12.500" r="2.500" fill="#eef0f3" stroke="none"/></svg>
<div class="lb" style="left:1813px;top:373px;width:110px;color:#a9abb1">MarsCode AI</div>
<div class="a" style="left:1919px;top:176px;width:11px;height:72px;border-radius:4px 0 0 4px;background:#3a3d42"></div>
<div class="a" style="left:1922px;top:216px;width:5px;height:24px;background:repeating-linear-gradient(180deg,#7bb07a 0 1px,#2f3134 1px 2px)"></div>

<!-- status bar -->
<div class="a" style="left:10px;top:992px;width:1920px;height:38px;background:#2b2d30;border-top:1px solid #1f2022"></div>
<div class="a" style="left:28px;top:1005px;width:10px;height:12px;border:1.500px solid #548af7;border-radius:2px"></div>
<div class="st" style="left:43px">xfc-ai</div>
<svg style="left:94px;top:1005px" width="7" height="12" viewBox="0 0 7 12"><path d="M1 1l5 5-5 5" stroke="#a4a7ad" stroke-width="1.200"/></svg>
<div class="a" style="left:113px;top:1005px;width:10px;height:12px;border:1.500px solid #548af7;border-radius:2px"></div>
<div class="st" style="left:128px">xfc-deepspeek</div>
<svg style="left:248px;top:1005px" width="7" height="12" viewBox="0 0 7 12"><path d="M1 1l5 5-5 5" stroke="#a4a7ad" stroke-width="1.200"/></svg>
<div class="st" style="left:266px">src</div>
<svg style="left:299px;top:1005px" width="7" height="12" viewBox="0 0 7 12"><path d="M1 1l5 5-5 5" stroke="#a4a7ad" stroke-width="1.200"/></svg>
<div class="st" style="left:318px">test</div>
<svg style="left:357px;top:1005px" width="7" height="12" viewBox="0 0 7 12"><path d="M1 1l5 5-5 5" stroke="#a4a7ad" stroke-width="1.200"/></svg>
<div class="st" style="left:376px">java</div>
<svg style="left:417px;top:1005px" width="7" height="12" viewBox="0 0 7 12"><path d="M1 1l5 5-5 5" stroke="#a4a7ad" stroke-width="1.200"/></svg>
<div class="st" style="left:435px">com</div>
<svg style="left:479px;top:1005px" width="7" height="12" viewBox="0 0 7 12"><path d="M1 1l5 5-5 5" stroke="#a4a7ad" stroke-width="1.200"/></svg>
<div class="st" style="left:497px">xfc</div>
<svg style="left:530px;top:1005px" width="7" height="12" viewBox="0 0 7 12"><path d="M1 1l5 5-5 5" stroke="#a4a7ad" stroke-width="1.200"/></svg>
<svg style="left:550px;top:1002px" width="18" height="18" viewBox="0 0 18 18"><circle cx="9" cy="9" r="8" stroke="#4b6eb8" stroke-width="1.500"/><path d="M12 6.300a4 4 0 1 0 0 5.400" stroke="#4b6eb8" stroke-width="1.200"/></svg>
<div class="st" style="left:574px">test01</div>
<svg style="left:631px;top:1005px" width="7" height="12" viewBox="0 0 7 12"><path d="M1 1l5 5-5 5" stroke="#a4a7ad" stroke-width="1.200"/></svg>
<svg style="left:650px;top:1002px" width="18" height="19" viewBox="0 0 18 19"><circle cx="9.500" cy="9" r="8" stroke="#c4524f" stroke-width="1.500"/><path d="M6 12V7l2 2 2-2 2 2v3" stroke="#c4524f" stroke-width="1.100"/><path d="M4 11l2.500 3.500L4 18l-2.500-3.500z" fill="#2b2d30" stroke="#ced0d6" stroke-width="1"/></svg>
<div class="st" style="left:675px">bubbleSort</div>

<div class="st" style="left:1258px;font-size:15.800px">48:1 (1011 chars, 37 line breaks)</div>
<svg style="left:1510px;top:1003px" width="17" height="18" viewBox="0 0 17 18"><path d="M4 2h9M3 16h10M13 2L3 16" stroke="#b5b7bc" stroke-width="1.300"/><circle cx="8.500" cy="9" r="5" stroke="#b5b7bc" stroke-width="1.200"/></svg>
<svg style="left:1548px;top:1003px" width="22" height="16" viewBox="0 0 25 16"><path d="M2 14L10 2M9 14L17 2M16 14L19 9" stroke="#eef0f3" stroke-width="3.500"/><circle cx="21.500" cy="12.500" r="2.500" fill="#eef0f3" stroke="none"/></svg>
<div class="st" style="left:1575px;font-size:15.500px">MarsCode AI</div>
<div class="st" style="left:1689px;font-size:15.500px">CRLF</div>
<div class="st" style="left:1745px">U</div>

<!-- watermark -->
<div class="a" style="left:1750px;top:970px;width:169px;height:50px;border-radius:8px;background:#d9f0d9;overflow:hidden;border-right:2px solid #8a9a8a;border-bottom:1px solid #8a9a8a">
<svg style="left:0;top:0" width="169" height="50" viewBox="0 0 169 50">
<g stroke="none">
<ellipse cx="12" cy="14" rx="3" ry="10" fill="#4f8a7a" transform="rotate(-25 12 14)"/>
<ellipse cx="23" cy="16" rx="3" ry="10" fill="#3f7f6a" transform="rotate(15 23 16)"/>
<ellipse cx="17" cy="30" rx="3" ry="8" fill="#5c94a6" transform="rotate(-40 17 30)"/>
<ellipse cx="30" cy="32" rx="3" ry="8" fill="#7eaa4c" transform="rotate(60 30 32)"/>
<ellipse cx="26" cy="44" rx="2.500" ry="7" fill="#4f8a7a" transform="rotate(-30 26 44)"/>
<ellipse cx="104" cy="10" rx="2.500" ry="9" fill="#5c9a6c" transform="rotate(-30 104 10)"/>
<ellipse cx="146" cy="8" rx="4" ry="4" fill="#5cb07c"/>
<ellipse cx="156" cy="6" rx="4" ry="3.500" fill="#4ea070"/>
<ellipse cx="150" cy="18" rx="3.500" ry="4" fill="#5cb07c"/>
<ellipse cx="160" cy="16" rx="3" ry="4" fill="#64b884"/>
<ellipse cx="142" cy="25" rx="3" ry="3" fill="#7cc494"/>
</g></svg>
</div>
<div class="t" style="left:1591px;top:983px;font-size:24.700px;line-height:30px;color:#d8dadd;text-shadow:1px 1px 2px rgba(0,0,0,.7)">掘金技术社区 @ 后端小肥肠</div>
</body></html>
